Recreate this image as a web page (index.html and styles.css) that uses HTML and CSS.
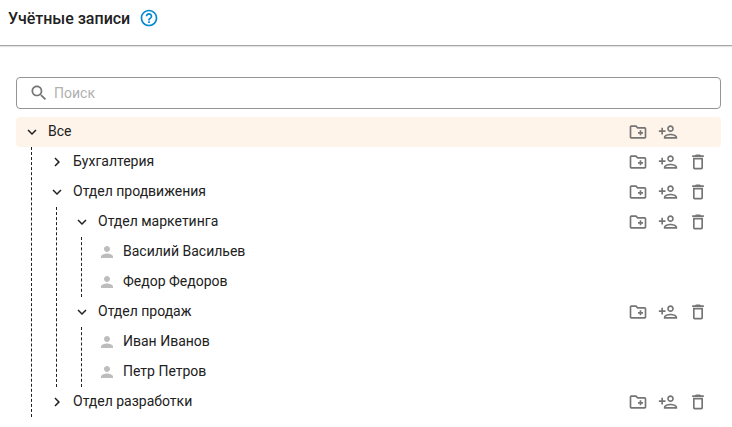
FILE: index.html
```html
<!DOCTYPE html>
<html lang="ru">
<head>
<meta charset="utf-8">
<title>Учётные записи</title>
<link rel="stylesheet" href="styles.css">
</head>
<body>
<svg class="sprite" xmlns="http://www.w3.org/2000/svg">
  <symbol id="down" viewBox="0 0 24 24"><path d="M7.41 8.59 12 13.17l4.59-4.58L18 10l-6 6-6-6z"/></symbol>
  <symbol id="right" viewBox="0 0 24 24"><path d="M8.59 16.59 13.17 12 8.59 7.41 10 6l6 6-6 6z"/></symbol>
  <symbol id="person" viewBox="0 0 24 24"><path d="M12 12c2.21 0 4-1.79 4-4s-1.79-4-4-4-4 1.79-4 4 1.79 4 4 4zm0 2c-2.67 0-8 1.34-8 4v2h16v-2c0-2.66-5.33-4-8-4z"/></symbol>
  <symbol id="folder" viewBox="0 0 24 24"><path d="M20 6h-8l-2-2H4c-1.11 0-1.99.89-1.99 2L2 18c0 1.11.89 2 2 2h16c1.11 0 2-.89 2-2V8c0-1.11-.89-2-2-2zm0 12H4V6h5.17l2 2H20v10zm-8-4h2v2h2v-2h2v-2h-2v-2h-2v2h-2z"/></symbol>
  <symbol id="add" viewBox="0 0 24 24"><path d="M15 12c2.21 0 4-1.79 4-4s-1.79-4-4-4-4 1.79-4 4 1.79 4 4 4zm0-6c1.1 0 2 .9 2 2s-.9 2-2 2-2-.9-2-2 .9-2 2-2zm0 8c-2.67 0-8 1.34-8 4v2h16v-2c0-2.66-5.33-4-8-4zm-6 4c.22-.72 3.31-2 6-2 2.7 0 5.8 1.29 6 2H9zm-3-3v-3h3v-2H6V7H4v3H1v2h3v3z"/></symbol>
  <symbol id="trash" viewBox="0 0 24 24"><path d="M6 19c0 1.1.9 2 2 2h8c1.1 0 2-.9 2-2V7H6v12zM8 9h8v10H8V9zm7.5-5-1-1h-5l-1 1H5v2h14V4z"/></symbol>
</svg>
<header class="header">
  <h1 class="title">Учётные записи</h1>
  <svg class="help" viewBox="0 0 24 24"><path d="M11 18h2v-2h-2v2zm1-16C6.48 2 2 6.48 2 12s4.48 10 10 10 10-4.48 10-10S17.52 2 12 2zm0 18c-4.41 0-8-3.59-8-8s3.59-8 8-8 8 3.590 8 8-3.590 8-8 8zm0-14c-2.210 0-4 1.790-4 4h2c0-1.100.9-2 2-2s2 .9 2 2c0 2-3 1.750-3 5h2c0-2.250 3-2.500 3-5 0-2.210-1.790-4-4-4z"/></svg>
</header>
<main class="content">
  <div class="search">
    <svg class="search-icon" viewBox="0 0 24 24"><path d="M15.500 14h-.79l-.28-.27C15.410 12.590 16 11.110 16 9.500 16 5.910 13.090 3 9.500 3S3 5.910 3 9.500 5.910 16 9.500 16c1.610 0 3.090-.59 4.230-1.570l.27.28v.79l5 4.990L20.490 19l-4.990-5zm-6 0C7.010 14 5 11.990 5 9.500S7.010 5 9.500 5 14 7.010 14 9.500 11.990 14 9.500 14z"/></svg>
    <input class="search-input" type="text" placeholder="Поиск">
  </div>
  <div class="row row-active">
    <svg class="arrow"><use href="#down"/></svg><span class="name">Все</span>
    <svg class="action"><use href="#folder"/></svg><svg class="action"><use href="#add"/></svg><span class="action"></span>
  </div>
  <div class="branch">
    <div class="row">
      <svg class="arrow"><use href="#right"/></svg><span class="name">Бухгалтерия</span>
      <svg class="action"><use href="#folder"/></svg><svg class="action"><use href="#add"/></svg><svg class="action"><use href="#trash"/></svg>
    </div>
    <div class="row">
      <svg class="arrow"><use href="#down"/></svg><span class="name">Отдел продвижения</span>
      <svg class="action"><use href="#folder"/></svg><svg class="action"><use href="#add"/></svg><svg class="action"><use href="#trash"/></svg>
    </div>
    <div class="branch">
      <div class="row">
        <svg class="arrow"><use href="#down"/></svg><span class="name">Отдел маркетинга</span>
        <svg class="action"><use href="#folder"/></svg><svg class="action"><use href="#add"/></svg><svg class="action"><use href="#trash"/></svg>
      </div>
      <div class="branch">
        <div class="row"><svg class="user"><use href="#person"/></svg><span class="name">Василий Васильев</span></div>
        <div class="row"><svg class="user"><use href="#person"/></svg><span class="name">Федор Федоров</span></div>
      </div>
      <div class="row">
        <svg class="arrow"><use href="#down"/></svg><span class="name">Отдел продаж</span>
        <svg class="action"><use href="#folder"/></svg><svg class="action"><use href="#add"/></svg><svg class="action"><use href="#trash"/></svg>
      </div>
      <div class="branch">
        <div class="row"><svg class="user"><use href="#person"/></svg><span class="name">Иван Иванов</span></div>
        <div class="row"><svg class="user"><use href="#person"/></svg><span class="name">Петр Петров</span></div>
      </div>
    </div>
    <div class="row">
      <svg class="arrow"><use href="#right"/></svg><span class="name">Отдел разработки</span>
      <svg class="action"><use href="#folder"/></svg><svg class="action"><use href="#add"/></svg><svg class="action"><use href="#trash"/></svg>
    </div>
  </div>
</main>
</body>
</html>
```
FILE: styles.css
```css
* { box-sizing: border-box; }
body {
  margin: 0;
  background: #fff;
  color: #212121;
  font-family: Roboto, sans-serif;
  font-size: 14px;
  overflow: hidden;
}
.sprite { display: none; }
.header {
  display: flex;
  align-items: center;
  gap: 8.5px;
  height: 46px;
  padding: 0 8px 9px;
  border-bottom: 1px solid #a6a6a6;
  box-shadow: 0 1px 1px #e4e4e4;
}
.title { margin: 0; font-size: 16px; font-weight: 500; }
.help { width: 20px; height: 20px; fill: #0288d1; }
.content { padding: 31px 11px 0 16px; }
.search {
  display: flex;
  align-items: center;
  height: 32px;
  margin-bottom: 8px;
  padding-left: 12px;
  border: 1px solid #949494;
  border-radius: 4px;
}
.search-icon { flex: none; width: 20px; height: 20px; fill: #757575; }
.search-input {
  flex: 1;
  padding: 0 0 0 5px;
  border: 0;
  outline: 0;
  background: none;
  font: inherit;
}
.search-input::placeholder { color: #b0b0b0; }
.row {
  display: flex;
  align-items: center;
  height: 30px;
  padding: 0 13px 0 7px;
  border-radius: 4px;
}
.row-active { background: #fef4ea; }
.arrow, .user { flex: none; width: 18px; height: 18px; margin-right: 7px; }
.arrow { fill: #212121; }
.user { fill: #bdbdbd; }
.name { flex: 1; padding-bottom: 2px; }
.action { flex: none; width: 20px; height: 20px; margin-left: 10px; fill: #757575; }
.branch {
  margin-left: 15px;
  padding-left: 9px;
  border-left: 1px dashed #212121;
}
```
